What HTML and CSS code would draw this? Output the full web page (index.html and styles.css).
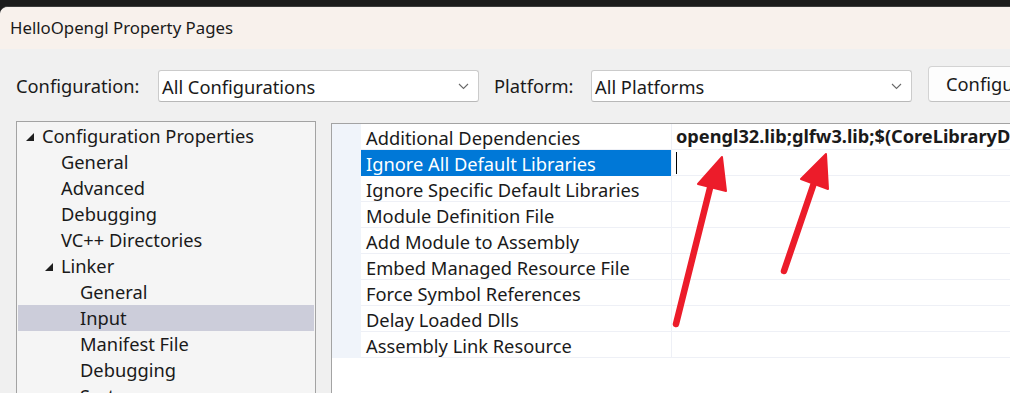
FILE: index.html
```html
<!DOCTYPE html>
<html>
<head>
<meta charset="utf-8">
<link rel="stylesheet" href="styles.css">
</head>
<body>
<div class="window">
  <div class="titlebar">HelloOpengl Property Pages</div>
  <div class="content">
    <div class="toolbar">
      <span class="label">Configuration:</span>
      <div class="select sel-config">
        <span>All Configurations</span>
        <svg class="chev" width="11" height="7" viewBox="0 0 11 7"><path d="M1 1 L5.5 5.5 L10 1" fill="none" stroke="#6a6a6a" stroke-width="1.1"/></svg>
      </div>
      <span class="label lbl-platform">Platform:</span>
      <div class="select sel-platform">
        <span>All Platforms</span>
        <svg class="chev" width="11" height="7" viewBox="0 0 11 7"><path d="M1 1 L5.5 5.5 L10 1" fill="none" stroke="#6a6a6a" stroke-width="1.1"/></svg>
      </div>
      <div class="button">Configuration Manager...</div>
    </div>
    <div class="main">
      <div class="tree">
        <div class="node l0"><span class="tri"></span>Configuration Properties</div>
        <div class="node l1">General</div>
        <div class="node l1">Advanced</div>
        <div class="node l1">Debugging</div>
        <div class="node l1">VC++ Directories</div>
        <div class="node l1"><span class="tri"></span>Linker</div>
        <div class="node l2">General</div>
        <div class="node l2 active">Input</div>
        <div class="node l2">Manifest File</div>
        <div class="node l2">Debugging</div>
        <div class="node l2">System</div>
      </div>
      <div class="grid">
        <div class="rows">
          <div class="row"><div class="gut"></div><div class="name">Additional Dependencies</div><div class="value bold">opengl32.lib;glfw3.lib;$(CoreLibraryDependencies);%(AdditionalDependencies)</div></div>
          <div class="row"><div class="gut"></div><div class="name sel">Ignore All Default Libraries</div><div class="value"><span class="caret"></span></div></div>
          <div class="row"><div class="gut"></div><div class="name">Ignore Specific Default Libraries</div><div class="value"></div></div>
          <div class="row"><div class="gut"></div><div class="name">Module Definition File</div><div class="value"></div></div>
          <div class="row"><div class="gut"></div><div class="name">Add Module to Assembly</div><div class="value"></div></div>
          <div class="row"><div class="gut"></div><div class="name">Embed Managed Resource File</div><div class="value"></div></div>
          <div class="row"><div class="gut"></div><div class="name">Force Symbol References</div><div class="value"></div></div>
          <div class="row"><div class="gut"></div><div class="name">Delay Loaded Dlls</div><div class="value"></div></div>
          <div class="row"><div class="gut"></div><div class="name">Assembly Link Resource</div><div class="value"></div></div>
        </div>
      </div>
    </div>
  </div>
</div>
<svg class="arrows" width="1010" height="393" viewBox="0 0 1010 393">
  <g stroke="#ec1c2a" stroke-width="6.5" stroke-linecap="round" fill="#ec1c2a" stroke-linejoin="round">
    <line x1="676" y1="324" x2="711" y2="184"/>
    <polygon points="722,157 698,184 726,191" stroke-width="2"/>
    <line x1="784" y1="271" x2="814" y2="183"/>
    <polygon points="826,154 801,179 828,189" stroke-width="2"/>
  </g>
</svg>
</body>
</html>
```
FILE: styles.css
```css
html, body {
  margin: 0;
  padding: 0;
  overflow: hidden;
  width: 1010px;
  height: 393px;
}
body {
  background: #1c1c1c;
  font-family: "Noto Sans", "Open Sans", sans-serif;
  font-size: 18.3px;
  color: #1a1a1a;
  position: relative;
}
.window {
  margin-top: 6px;
  border-top: 1px solid #3c3c3c;
  border-top-left-radius: 8px;
  background: #f0f0f0;
  height: 386px;
  overflow: hidden;
}
.titlebar {
  height: 42px;
  background: #f8f1ec;
  padding-left: 10px;
  font-size: 16.8px;
  line-height: 41px;
  white-space: nowrap;
}
.content {
  padding-left: 16px;
}
.toolbar {
  display: flex;
  align-items: flex-end;
  white-space: nowrap;
  padding-top: 17px;
  height: 36px;
}
.label {
  line-height: 32px;
  width: 142px;
  flex-shrink: 0;
}
.lbl-platform {
  width: 97px;
}
.select {
  box-sizing: border-box;
  height: 32px;
  background: #fff;
  border: 1px solid #cbcbcb;
  border-bottom-color: #b8b8b8;
  border-radius: 3px;
  display: flex;
  align-items: center;
  justify-content: space-between;
  padding: 0 9px 0 3px;
  flex-shrink: 0;
}
.sel-config {
  width: 321px;
  margin-right: 15px;
}
.sel-platform {
  width: 321px;
  margin-right: 16px;
}
.chev {
  margin-top: 1px;
}
.button {
  box-sizing: border-box;
  height: 36px;
  line-height: 34px;
  padding: 0 17px;
  background: #fdfdfd;
  border: 1px solid #d3d3d3;
  border-bottom-color: #c2c2c2;
  border-radius: 4px;
  flex-shrink: 0;
}
.main {
  display: flex;
  align-items: flex-start;
  margin-top: 19px;
}
.tree {
  box-sizing: border-box;
  width: 300px;
  height: 300px;
  border: 1px solid #a3a3a3;
  background: #f5f5f5;
  padding: 1px 1px 0 1px;
  flex-shrink: 0;
}
.node {
  height: 26px;
  line-height: 26px;
  white-space: nowrap;
  display: flex;
  align-items: center;
}
.node.l0 { padding-left: 8px; }
.node.l1 { padding-left: 43px; }
.node.l2 { padding-left: 62px; }
.node.l1:has(.tri) { padding-left: 27px; }
.tri {
  width: 0;
  height: 0;
  border-style: solid;
  border-width: 0 0 8px 8px;
  border-color: transparent transparent #1e1e1e transparent;
  margin-right: 8px;
  margin-top: 1px;
}
.node.active {
  background: #cccdda;
}
.grid {
  box-sizing: border-box;
  margin-left: 15px;
  margin-top: 2px;
  width: 800px;
  height: 300px;
  border: 1px solid #a3a3a3;
  background: #fff;
  flex-shrink: 0;
}
.row {
  display: flex;
  height: 26px;
}
.gut {
  width: 29px;
  background: #f0f4fa;
  flex-shrink: 0;
}
.name {
  box-sizing: border-box;
  width: 310px;
  padding-left: 5px;
  line-height: 27px;
  border-bottom: 1px solid #eef0f6;
  white-space: nowrap;
  flex-shrink: 0;
}
.name.sel {
  background: #0078d7;
  color: #fff;
  border-bottom-color: #0078d7;
}
.value {
  box-sizing: border-box;
  flex: 1;
  border-left: 1px solid #eef0f6;
  border-bottom: 1px solid #eef0f6;
  padding-left: 4px;
  line-height: 27px;
  white-space: nowrap;
  overflow: hidden;
  display: flex;
  align-items: center;
}
.value.bold {
  font-weight: bold;
  font-size: 18.2px;
}
.caret {
  width: 1px;
  height: 22px;
  background: #000;
}
.arrows {
  position: absolute;
  left: 0;
  top: 0;
  pointer-events: none;
}
```
